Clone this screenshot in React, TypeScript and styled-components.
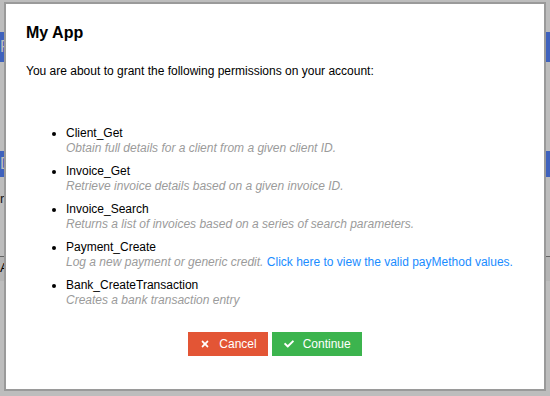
import * as React from 'react';
import styled, { createGlobalStyle } from 'styled-components';
import { FaTimes, FaCheck } from 'react-icons/fa';

const GlobalStyle = createGlobalStyle`
  html, body {
    margin: 0;
    padding: 0;
    background: #ffffff;
    font-family: 'Liberation Sans', Arial, sans-serif;
  }
`;

const Page = styled.div`
  width: 550px;
  height: 396px;
  overflow: hidden;
  display: flex;
  flex-direction: column;
  padding-top: 32px;
  box-sizing: border-box;
`;

const Banner = styled.div<{ height: number }>`
  height: ${({ height }) => height}px;
  background: #5585ff;
  color: #ffffff;
  font-size: 16px;
  line-height: ${({ height }) => height}px;
`;

const PageText = styled.div`
  font-size: 13px;
  color: #222;
`;

const PageTable = styled.div`
  border-top: 1px solid #888;
  height: 24px;
  background: #f3f3f3;
  font-size: 13px;
  line-height: 22px;
`;

const Backdrop = styled.div`
  position: fixed;
  inset: 0;
  background: rgba(0, 0, 0, 0.26);
`;

const Dialog = styled.div`
  position: fixed;
  left: 4px;
  top: 2px;
  width: 542px;
  box-sizing: border-box;
  background: #ffffff;
  border: 2px solid #9a9a9a;
  padding: 20px 20px 33px 20px;
  display: flex;
  flex-direction: column;
`;

const Title = styled.h2`
  margin: 0;
  font-size: 16px;
  line-height: 18px;
  font-weight: bold;
  color: #000;
`;

const Intro = styled.p`
  margin: 21px 0 0 0;
  font-size: 12px;
  line-height: 16px;
  color: #000;
`;

const PermissionList = styled.ul`
  margin: 47px 0 0 0;
  padding-left: 40px;
  list-style: disc;
`;

const Permission = styled.li`
  font-size: 12px;
  color: #000;
  margin-bottom: 9px;

  &:last-child {
    margin-bottom: 0;
  }
`;

const Name = styled.div`
  line-height: 15px;
`;

const Description = styled.div`
  font-style: italic;
  color: #9b9b9b;
  line-height: 14px;
`;

const Link = styled.a`
  font-style: normal;
  color: #1a8cff;
  text-decoration: none;
`;

const Actions = styled.div`
  margin-top: 25px;
  display: flex;
  justify-content: center;
  gap: 4px;
`;

const Button = styled.button<{ tone: 'cancel' | 'continue' }>`
  height: 24px;
  border: none;
  border-radius: 0;
  padding: 0 11px 0 12px;
  display: flex;
  align-items: center;
  gap: 9px;
  font-family: 'Liberation Sans', Arial, sans-serif;
  font-size: 12px;
  color: #ffffff;
  background: ${({ tone }) => (tone === 'cancel' ? '#e35535' : '#3cb44e')};
  cursor: pointer;

  svg {
    width: 10px;
    height: 10px;
  }
`;

const permissions = [
  {
    name: 'Client_Get',
    description: 'Obtain full details for a client from a given client ID.',
  },
  {
    name: 'Invoice_Get',
    description: 'Retrieve invoice details based on a given invoice ID.',
  },
  {
    name: 'Invoice_Search',
    description: 'Returns a list of invoices based on a series of search parameters.',
  },
  {
    name: 'Payment_Create',
    description: 'Log a new payment or generic credit.',
    link: 'Click here to view the valid payMethod values.',
  },
  {
    name: 'Bank_CreateTransaction',
    description: 'Creates a bank transaction entry',
  },
];

export default function App() {
  return (
    <>
      <GlobalStyle />
      <Page>
        <Banner height={30}>Portal</Banner>
        <div style={{ height: 89 }} />
        <Banner height={26}>Dashboard</Banner>
        <PageText style={{ marginTop: 14 }}>reports</PageText>
        <div style={{ height: 50 }} />
        <PageTable>Account</PageTable>
      </Page>
      <Backdrop />
      <Dialog>
        <Title>My App</Title>
        <Intro>You are about to grant the following permissions on your account:</Intro>
        <PermissionList>
          {permissions.map(p => (
            <Permission key={p.name}>
              <Name>{p.name}</Name>
              <Description>
                {p.description}
                {p.link && (
                  <>
                    {' '}
                    <Link href="#">{p.link}</Link>
                  </>
                )}
              </Description>
            </Permission>
          ))}
        </PermissionList>
        <Actions>
          <Button tone="cancel">
            <FaTimes />
            Cancel
          </Button>
          <Button tone="continue">
            <FaCheck />
            Continue
          </Button>
        </Actions>
      </Dialog>
    </>
  );
}
